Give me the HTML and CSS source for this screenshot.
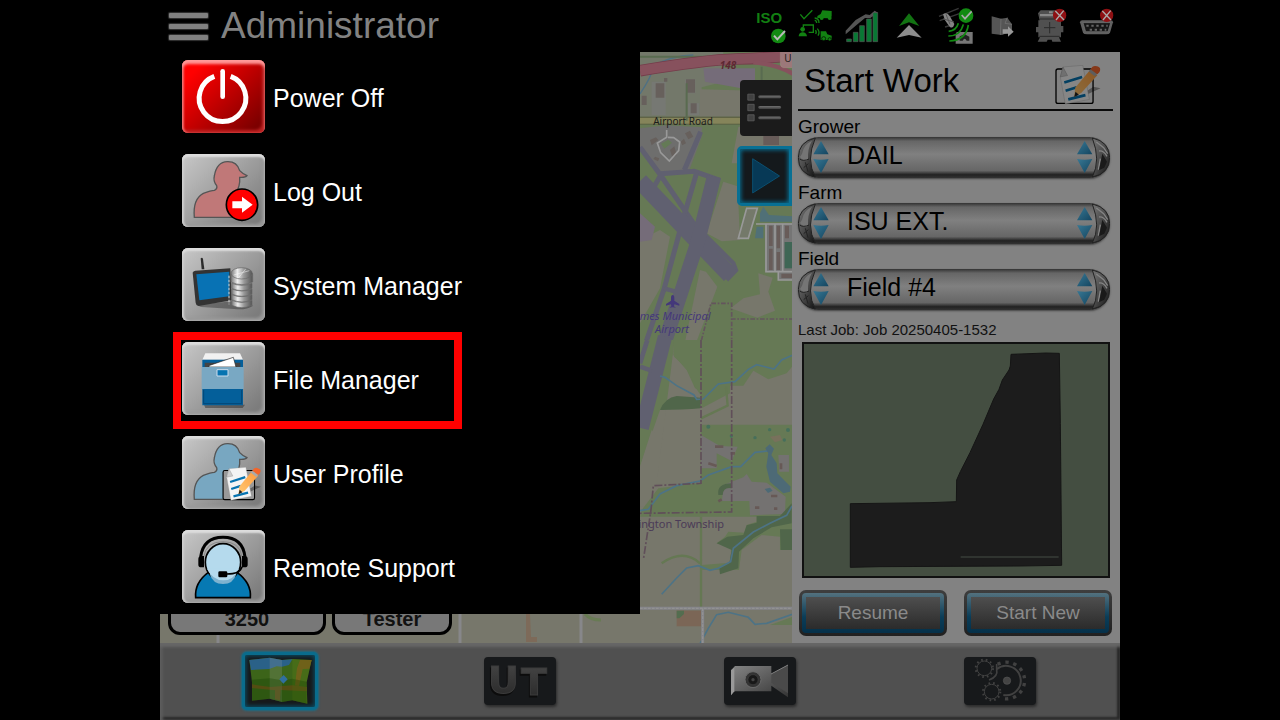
FILE: index.html
```html
<!DOCTYPE html>
<html lang="en">
<head>
  <meta charset="UTF-8">
  <meta name="viewport" content="width=device-width, initial-scale=1">
  <title>Start Work</title>
  <link rel="stylesheet" href="styles.css">
</head>
<body>
<svg class="defs" aria-hidden="true">
  <defs>
    <linearGradient id="steel" x1="0" x2="1"><stop offset="0" stop-color="#777"/><stop offset=".3" stop-color="#eee"/><stop offset=".6" stop-color="#999"/><stop offset="1" stop-color="#555"/></linearGradient>
    <linearGradient id="blueArrow" x1="0" x2="1" y1="0" y2="1"><stop offset="0" stop-color="#387894"/><stop offset="1" stop-color="#144560"/></linearGradient>
    <linearGradient id="chrome" x1="0" x2="1" y2="1"><stop offset="0" stop-color="#777"/><stop offset=".5" stop-color="#4a4a4a"/><stop offset="1" stop-color="#111"/></linearGradient>
    <linearGradient id="darkLetter" x2="0" y2="1"><stop offset="0" stop-color="#484848"/><stop offset="1" stop-color="#262626"/></linearGradient>
    <linearGradient id="camera" x2="1" y2="1"><stop offset="0" stop-color="#868686"/><stop offset="1" stop-color="#343434"/></linearGradient>
    <linearGradient id="wood" x1="1" x2="0" y2="1"><stop offset="0" stop-color="#ff9a3c"/><stop offset="1" stop-color="#ffc873"/></linearGradient>
    <symbol id="note" viewBox="0 0 140 130">
      <rect x="5" y="12" width="112" height="104" rx="6" fill="none" stroke="#000" stroke-width="4"/>
      <path d="M38 118 118 80 140 70 118 66Z" fill="#000" opacity=".35"/>
      <path d="M26 6 86 1 106 104 33 118 18 36Z" fill="#f4f4f4" stroke="#999"/>
      <path d="M26 6 40 32 18 36Z" fill="#ccc" stroke="#777"/>
      <path d="M30 53 84 36M34 78 68 67M42 104 94 91" stroke="#0673b0" stroke-width="8"/>
      <path d="M60 97 63 69 108 15 130 31 82 84Z" fill="url(#wood)"/>
      <path d="M60 97 64 81 74 90Z" fill="#222"/>
      <path d="M104 20 112 10 131 25 123 35Z" fill="#aaa"/>
      <path d="M109 13 Q117-1 129 4 Q144 8 136 22L130 28Z" fill="#f3652b"/>
    </symbol>
    <symbol id="person" viewBox="68 42 249 219">
      <path d="M105 232Q100 177 132 160Q155 151 165 151Q175 147 172 137Q161 123 165 108Q172 66 204 65Q233 64 241 92Q247 99 263 107Q259 113 241 112Q243 139 229 158L255 232Z" fill="currentColor" stroke="#555" stroke-width="4"/>
    </symbol>
    <symbol id="arrows" viewBox="0 0 52 100">
      <path d="M26 2 49 42 3 42Z" fill="url(#blueArrow)"/>
      <path d="M26 98 49 56Q26 60 3 56Z" fill="url(#blueArrow)"/>
    </symbol>
    <symbol id="cap-left" viewBox="0 0 99 123">
      <path d="M52 3Q1 14 1 62T52 120Q23 70 52 3Z" fill="url(#chrome)" stroke="#222" stroke-width="3"/>
      <path d="M12 50Q17 22 42 11 28 35 30 68Q16 76 6 60Z" fill="#757575"/>
      <path d="M5 66Q16 74 33 66M17 92 31 80M22 76 30 104" stroke="#222" stroke-width="3" fill="none"/>
      <use href="#arrows" x="43" y="10" width="52" height="100"/>
    </symbol>
    <symbol id="cap-right" viewBox="0 0 99 123">
      <path d="M46 3Q98 14 98 62T46 120Q72 70 46 3Z" fill="url(#chrome)" stroke="#222" stroke-width="3"/>
      <path d="M58 15 80 32 92 50M66 42Q80 40 90 58M70 65 64 98" stroke="#858585" stroke-width="4" fill="none"/>
      <path d="M76 50 90 74 82 92 66 100Z" fill="#1a1a1a"/>
      <use href="#arrows" x="-3" y="10" width="52" height="100"/>
    </symbol>
    <symbol id="bad" viewBox="0 0 42 42">
      <circle cx="21" cy="21" r="20" fill="#8e1013"/>
      <path d="M8 8 34 35M33 7 10 35" stroke="#aaa" stroke-width="4"/>
    </symbol>
  </defs>
</svg>

<div class="screen">
  <header class="topbar">
    <button class="hamburger" aria-label="Menu"><span></span><span></span><span></span></button>
    <h1>Administrator</h1>
    <div class="status">
      <!-- ISO -->
      <svg viewBox="30 12 120 132">
        <text x="49" y="68" class="iso">ISO</text>
        <circle cx="115" cy="108" r="22" fill="#128a12"/>
        <path d="M102 107 112 118 135 93" fill="none" stroke="#bbb" stroke-width="6"/>
      </svg>
      <!-- task link -->
      <svg viewBox="171 12 120 132">
        <g fill="none" stroke="#128212" stroke-width="4">
          <path d="M181 43 192 56 217 31M190 82V75H220V97H206M224 54Q237 55 237 69M224 61Q230 62 230 69M226 91Q231 96 227 102M232 86Q241 96 234 107"/>
        </g>
        <g fill="#128212">
          <circle cx="188" cy="88" r="7"/><path d="M176 109Q177 97 188 97T201 109Z"/>
          <path d="M232 48 242 42 247 31 275 33 275 49 270 55 232 54Z"/><circle cx="245" cy="54" r="6"/><circle cx="269" cy="54" r="6"/>
          <path d="M242 94H258L262 103 275 107V120H242Z"/>
        </g>
        <circle cx="251" cy="116" r="6" fill="#128212" stroke="#000" stroke-width="2"/><circle cx="269" cy="118" r="5" fill="#128212" stroke="#000" stroke-width="2"/>
      </svg>
      <!-- signal -->
      <svg viewBox="312 12 120 132">
        <path d="M317 103V92L347 60 369 47 377 43 389 45 404 32 414 38 391 54 375 54 347 77Z" fill="#555"/>
        <path d="M320 117h14v8h-14zM340 97h14v28h-14zM359 77h14v48h-14zM380 57h14v68h-14zM399 38h14v87h-14z" fill="#087834" stroke="#555" stroke-width="2"/>
      </svg>
      <!-- heading -->
      <svg viewBox="453 12 120 132">
        <path d="M507 40 538 78 507 67 477 78Z" fill="#127312"/>
        <path d="M507 75 545 113 507 105 470 113Z" fill="#8c8c8c"/>
      </svg>
      <!-- satellite -->
      <svg viewBox="24 12 120 132">
        <path d="M27 49 86 25M29 62 88 41M45 81 66 75" stroke="#383838" stroke-width="4"/>
        <path d="M39 43Q51 34 59 48L73 72Q69 88 59 80L45 61Z" fill="#858585"/>
        <path d="M40 57 72 66M48 43 60 73" stroke="#555" stroke-width="3"/>
        <path d="M80 96H128V131H77V106Z" fill="#777"/><path d="M89 122V109L104 103 118 110V122H110Q104 110 98 122Z" fill="#222"/>
        <g fill="none" stroke="#128a12" stroke-width="5"><path d="M56 94Q79 92 85 70M55 108Q91 108 100 73M58 123Q108 121 115 75"/></g>
        <circle cx="108" cy="47" r="22" fill="#128a12"/><path d="M95 45 105 56 125 34" fill="none" stroke="#aaa" stroke-width="5"/>
      </svg>
      <!-- file transfer -->
      <svg viewBox="165 12 120 132">
        <path d="M185 49 213 56 232 53 246 73V94L216 105 185 101Z" fill="#555"/>
        <path d="M213 56 211 105M232 53 225 70 246 73" stroke="#777" stroke-width="2" fill="none"/>
        <path d="M218 88H234V79L251 95 234 110V101H218Z" fill="#999"/>
      </svg>
      <!-- device -->
      <svg viewBox="306 12 120 132">
        <path d="M324 40 332 31H385V62H393V78H400V97H393V112H387L393 125H367L365 119H353L350 125H323L330 112H325V97H318V81H325V61H329Z" fill="#505050"/>
        <path d="M330 42H371V49H330ZM357 34H368V40H357Z" fill="#888"/>
        <path d="M330 57H386M328 109H389M359 66V100M342 83H376" stroke="#2b2b2b" stroke-width="3" fill="none"/>
        <use href="#bad" x="368" y="25" width="42" height="42"/>
      </svg>
      <!-- connector -->
      <svg viewBox="447 12 120 132">
        <path d="M450 67Q450 61 457 61H543Q549 61 549 67L540 98Q538 103 528 103H471Q461 103 459 98Z" fill="#606060"/>
        <path d="M459 68H542L534 95H467Z" fill="#161616" stroke="#777" stroke-width="2"/>
        <path d="M469 77h64M479 89h50" stroke="#666" stroke-width="6" stroke-dasharray="7 8"/>
        <use href="#bad" x="509" y="25" width="42" height="42"/>
      </svg>
    </div>
  </header>

  <main class="main">
    <section class="map">
      <svg class="map-canvas" viewBox="160 52 632 591" preserveAspectRatio="xMaxYMax slice">
        <rect x="160" y="52" width="632" height="591" fill="#77776b"/>
        <!-- north half: airport -->
        <g transform="translate(640 50) scale(.3333)">
          <path d="M0 0H480V880H0Z" fill="#667955"/>
          <path d="M0 0H250V95L185 112V200H0Z" fill="#73786a"/>
          <path d="M190 55H345V122L195 95Z" fill="#756c79"/>
          <path d="M180 118 345 122V200H180ZM250 395 293 409 300 570 245 574 200 550ZM295 230H480V340H275ZM180 660 198 665 232 710 160 900H130ZM355 670 398 683 385 725 405 782 352 803 272 775 310 745 360 733ZM0 570 60 540 90 560 60 715 0 820Z" fill="#77776b"/>
          <path d="M0 490 45 530 35 570 0 575Z" fill="#756c79"/>
          <path d="M0 235 80 226 186 232 185 260 145 368 60 375 0 300Z" fill="#6e6e6d"/>
          <path d="M35 95H77V195H35ZM136 88H166V130H136ZM143 160H178V195H143Z" fill="#777" opacity=".7"/>
          <path d="M47 100H73V143H47ZM138 88H165V128H138ZM152 160H170V190H152ZM5 137H20V165H5ZM72 84H82V95H72ZM135 250 150 242 160 260 145 268ZM90 300 103 289 110 315 98 325ZM30 270 48 262 55 270 35 286ZM122 275 132 266 138 280 127 286ZM45 320 58 325 54 334 40 327Z" fill="#67605c"/>
          <path d="M0 212H480" stroke="#55583f" stroke-width="23"/><path d="M0 212H480" stroke="#85845a" stroke-width="18"/>
          <path d="M0 132Q35 80 40 50 80 20 160 15" stroke="#4e7083" stroke-width="4" fill="none"/>
          <path d="M365 50V195M0 20H210M140 100V212" stroke="#596b50" stroke-width="6"/>
          <path d="M0 62Q190 30 290 27T480 15" stroke="#743c4a" stroke-width="35" fill="none"/><path d="M0 62Q190 30 290 27T480 15" stroke="#87515d" stroke-width="30" fill="none"/>
          <path d="M340 37Q430 45 480 86" stroke="#87515d" stroke-width="13" fill="none"/>
          <path d="M421 0H480V53H430Q421 51 421 42Z" fill="#9c787a" stroke="#a98"/>
          <path d="M80 240V262L52 279 62 308 88 333 116 302 119 276 101 263 84 262" stroke="#999" stroke-width="5" fill="none"/>
          <path d="M63 281 85 269 96 278 73 296Z" fill="#647a56"/>
          <g fill="none" stroke="#606070">
            <path d="M182 245 133 360M0 292 62 376 171 535M62 376 40 414M62 371 163 364 240 391" stroke-width="15"/>
            <path d="M170 368 130 505 72 718 10 900" stroke-width="15"/>
            <path d="M72 715 115 727M130 495 150 515 190 550 280 640 288 661 260 690" stroke-width="13"/>
            <path d="M0 393 270 676" stroke-width="50"/>
            <path d="M222 380 175 570 60 920" stroke-width="43"/>
          </g>
          <path d="M320 475H352L325 565H295Z" fill="#74796a" stroke="#999" stroke-width="5"/>
          <path d="M360 490 370 470 387 495 480 500V515H360ZM350 530H370V565H345Z" fill="#507077"/>
          <path d="M376 520H480V690H415V667H376Z" fill="#757575"/>
          <path d="M348 522H480M378 520V665H480M405 522V665M428 522V665M415 665V690H480" stroke="#999" stroke-width="5" fill="none"/>
          <path d="M387 527H398V588H387ZM387 596H398V660H387ZM410 527H420V595H410ZM410 606H420V660H410ZM435 527H447V565H435ZM424 671H480V684H424ZM370 255H417V285H370Z" fill="#685c59"/>
          <path d="M434 576H480V655H434Z" fill="#3f6655"/>
          <path d="M98 735Q103 735 103 745V752L118 762V767L103 763 102 769 108 773 98 772 88 773 94 769 93 763 78 767V762L93 752V745Q93 735 98 735Z" fill="#44387a"/>
          <path d="M182 900V880L213 760H275V900M273 807H480" stroke="#64555d" stroke-width="5" stroke-dasharray="14 5 5 5" fill="none"/>
        </g>
        <!-- south half: township -->
        <g transform="translate(640 340) scale(.3333)">
          <path d="M0 10H480V915H0Z" fill="#77776b"/>
          <path d="M0 0H100Q110 60 140 100L165 150 180 180V0H480V50L440 100 385 118 340 92 310 137H270V160L185 205 182 182 182 173 110 168 60 210 0 380Z" fill="#667955"/>
          <path d="M110 50Q130 90 165 150L180 165V10H108Z" fill="#667955"/>
          <path d="M104 0 100 45 140 90 165 145 182 150V300H70L35 270 0 380V500H180V430H50Z" fill="#77776b"/>
          <path d="M100 0H185V170L165 140Q150 85 102 50Z" fill="#667955"/>
          <path d="M182 254H480V530H0L5 510 55 445 182 428Z" fill="#667955"/>
          <path d="M60 210Q75 173 110 168L182 173V205Q130 210 60 210Z" fill="#50664a"/>
          <path d="M75 -10 5 265" stroke="#606070" stroke-width="43"/>
          <path d="M22 0 0 70M0 80 35 92" stroke="#606070" stroke-width="14"/>
          <path d="M183 235 263 197 258 140M183 530V800M65 670Q130 625 180 670" stroke="#657853" stroke-width="7" fill="none"/>
          <path d="M183 285 240 318 293 320 275 363 230 340V385H183ZM250 435 310 412 320 402 335 425 380 428 437 470 435 522 330 526 328 483H246ZM415 345H447V395H418Z" fill="#747271"/>
          <path d="M235 465Q230 430 275 430V445Q250 440 248 465Z" fill="#50664a"/>
          <path d="M390 290 420 285 427 300 405 307Z" fill="#78715c"/>
          <path d="M265 575 313 578 320 555 350 545V530H440L480 500V630H420V590L365 585 305 630 297 690H185V675L270 668 275 620 230 610 255 590Z" fill="#667955"/>
          <path d="M230 610 262 590 310 585 320 556 350 548V528H420L455 490V550L395 562 340 595 297 635 295 685 240 703 238 685 268 670 275 630ZM420 568H480V630H422Z" fill="#50664a"/>
          <g fill="none" stroke="#4d7386" stroke-width="5">
            <path d="M60 108 75 112 110 137 162 165 170 178 190 177 235 132 285 125 325 88 350 74 402 87 425 60 480 35"/>
            <path d="M0 512 25 508 60 462 110 437 180 423 205 405 275 380 302 380 345 337 390 332"/>
            <path d="M65 763 110 714 140 684 175 677 210 691 235 685 272 665 280 625 340 576 390 550 440 526 455 500 480 490"/>
            <path d="M178 915 205 865 230 824 265 817 325 832 345 853 380 850 480 815"/>
          </g>
          <path d="M376 325 389 313 402 326 394 345 410 370 412 400 452 440 450 455 430 460 390 425 379 380 385 340ZM374 447 390 443 398 452 384 459Z" fill="#4d6a76"/>
          <g fill="#466f5b"><circle cx="205" cy="260" r="6"/><circle cx="274" cy="288" r="5"/><circle cx="345" cy="293" r="5"/><circle cx="389" cy="269" r="5"/><circle cx="444" cy="270" r="6"/><circle cx="433" cy="300" r="5"/></g>
          <path d="M205 370 230 378M225 320H250M272 340H285M235 484 245 478M345 503H358M402 506H412M393 468H412M423 370V388" stroke="#675956" stroke-width="8"/>
          <path d="M183 0V430L40 437 33 510 10 660M275 0V516L0 520" stroke="#604f59" stroke-width="5" stroke-dasharray="24 6 6 6" fill="none"/>
          <path d="M110 812H183V859H110Z" fill="#7b6656"/><path d="M110 812H132V822L118 835H110Z" fill="#536d4f"/>
          <path d="M390 855 480 822V855Z" fill="#667955"/>
          <path d="M0 805H480M188 805V915" stroke="#85858a" stroke-width="9"/><path d="M0 805H480M188 805V915" stroke="#929292" stroke-width="4" stroke-dasharray="8 4"/>
        </g>
        <!-- strip under the menu -->
        <path d="M218 600V643M460 600V643M581 600V643" stroke="#87878a" stroke-width="3"/>
        <path d="M526 614H530L531 637H537V642H526Z" fill="#7d6a59"/>
        <path d="M585 614Q590 620 601 620" stroke="#687b54" stroke-width="3" fill="none"/>
        <g class="map-labels">
          <text x="728" y="69" class="road-no">148</text>
          <text x="683" y="125" class="road">Airport Road</text>
          <text x="788" y="62" class="road">U</text>
          <text x="672" y="320" class="airport">Ames Municipal</text>
          <text x="672" y="333" class="airport">Airport</text>
          <text x="724" y="528" class="town">Washington Township</text>
        </g>
      </svg>

      <div class="readouts">
        <div class="readout wide">3250</div>
        <div class="readout">Tester</div>
      </div>

      <div class="map-tools">
        <button class="tool" aria-label="Layers">
          <svg viewBox="302 92 154 164">
            <path d="M325 133h19v18h-19zM325 163h19v19h-19zM325 194h19v18h-19z" fill="#414141" stroke="#666" stroke-width="2"/>
            <path d="M360 141H420M360 172H420M360 203H420" stroke="#555" stroke-width="8" stroke-linecap="round"/>
            <path d="M360 139H420M360 170H420M360 201H420" stroke="#777" stroke-width="2"/>
          </svg>
        </button>
        <button class="tool active" aria-label="Run">
          <svg viewBox="308 301 130 150"><path d="M336 322 420 376 336 429Z" fill="#073956" stroke="#0b5273" stroke-width="3"/></svg>
        </button>
      </div>
    </section>

    <aside class="panel">
      <div class="panel-head">
        <h2>Start Work</h2>
        <button class="edit" aria-label="Edit"><svg viewBox="0 0 140 130"><use href="#note"/></svg></button>
      </div>
      <label for="grower">Grower</label>
      <div class="picker">
        <svg class="cap"><use href="#cap-left"/></svg>
        <select id="grower"><option>DAIL</option></select>
        <svg class="cap"><use href="#cap-right"/></svg>
      </div>
      <label for="farm">Farm</label>
      <div class="picker">
        <svg class="cap"><use href="#cap-left"/></svg>
        <select id="farm"><option>ISU EXT.</option></select>
        <svg class="cap"><use href="#cap-right"/></svg>
      </div>
      <label for="field">Field</label>
      <div class="picker">
        <svg class="cap"><use href="#cap-left"/></svg>
        <select id="field"><option>Field #4</option></select>
        <svg class="cap"><use href="#cap-right"/></svg>
      </div>
      <p class="last-job">Last Job: Job 20250405-1532</p>
      <svg class="preview" viewBox="42 22 912 696">
        <path d="M663 53 768 49 808 50 811 260 815 686 690 688 270 690 181 692V501L420 498 499 495 500 430 511 405 540 348 579 263 611 187 627 158 637 130 657 100 661 88Z" fill="#1c1c1c" stroke="#151515" stroke-width="3"/>
        <path d="M512 661H806" stroke="#454d45" stroke-width="3"/>
      </svg>
      <div class="actions">
        <button class="action">Resume</button>
        <button class="action">Start New</button>
      </div>
    </aside>

    <nav class="menu">
      <button class="item">
        <span class="tile red"><svg viewBox="68 180 249 219"><path d="M165 229A70 70 0 1 0 214 229" fill="none" stroke="#fff" stroke-width="15"/><path d="M190 214V290" stroke="#fff" stroke-width="14" stroke-linecap="round"/></svg></span>
        <span class="item-text">Power Off</span>
      </button>
      <button class="item">
        <span class="tile"><svg viewBox="68 42 249 219">
          <use href="#person" x="68" y="42" width="249" height="219" color="#c07878"/>
          <circle cx="248" cy="194" r="47" fill="#f00" stroke="#000" stroke-width="5"/>
          <path d="M219 184H248V170L280 194 248 218V205H219Z" fill="#fff"/>
        </svg></span>
        <span class="item-text">Log Out</span>
      </button>
      <button class="item">
        <span class="tile"><svg viewBox="68 323 249 219">
          <path d="M110 493 220 483 282 496Q260 510 225 506L125 500Z" fill="#222" opacity=".4"/>
          <path d="M124 354Q129 350 131 356L135 387H127Z" fill="#2b2b2b"/>
          <path d="M100 397Q101 392 108 391L213 384 217 480 118 497Q110 495 109 488Z" fill="#333"/>
          <path d="M111 402 210 394V468L120 480Z" fill="#0872b4"/>
          <g fill="url(#steel)" stroke="#666" stroke-width="2">
            <path d="M217 480V495Q248 509 278 495V480Q248 492 217 480Z"/>
            <path d="M217 463V478Q248 492 278 478V463Q248 475 217 463Z"/>
            <path d="M217 446V461Q248 475 278 461V446Q248 458 217 446Z"/>
            <path d="M217 429V444Q248 458 278 444V429Q248 441 217 429Z"/>
            <path d="M215 400V425Q248 441 280 425V400Z"/>
            <ellipse cx="247" cy="399" rx="32" ry="17"/>
          </g>
          <path d="M223 404 270 391M237 413 259 386" stroke="#fff" stroke-width="2" opacity=".7"/>
          <path d="M209 406V492" stroke="#ddd" stroke-width="3" stroke-dasharray="8 4"/>
        </svg></span>
        <span class="item-text">System Manager</span>
      </button>
      <button class="item marked">
        <span class="tile"><svg viewBox="68 48 249 219">
          <path d="M134 236H257L250 246H138Z" fill="#222" opacity=".45"/>
          <path d="M129 101 138 82H242L251 101Z" fill="#f1f1f1"/>
          <path d="M129 101H251V238H129Z" fill="#045f9a"/>
          <path d="M136 110H243V124H136Z" fill="#444"/>
          <path d="M148 119 222 94 230 123H150Z" fill="#fff" stroke="#222" stroke-width="2"/>
          <path d="M127 123H253V189H127Z" fill="#79a8c3"/>
          <path d="M173 131H206V150H173Z" fill="#0673b0" stroke="#cde" stroke-width="3"/>
          <path d="M133 192V233H247V192" stroke="#034677" stroke-width="3" fill="none"/>
        </svg></span>
        <span class="item-text">File Manager</span>
      </button>
      <button class="item">
        <span class="tile"><svg viewBox="68 330 249 219">
          <use href="#person" x="68" y="330" width="249" height="219" color="#78a7c1"/>
          <rect x="191" y="433" width="95" height="89" rx="5" fill="#999"/>
          <use href="#note" x="187" y="423" width="118" height="110"/>
        </svg></span>
        <span class="item-text">User Profile</span>
      </button>
      <button class="item">
        <span class="tile"><svg viewBox="68 56 249 219">
          <path d="M109 259Q105 214 147 183H233Q277 215 273 259Z" fill="#0679b3" stroke="#000" stroke-width="5"/>
          <ellipse cx="191" cy="153" rx="53" ry="56" fill="#b5daed" stroke="#000" stroke-width="5"/>
          <path d="M151 188H231Q222 218 191 218T151 188Z" fill="#7db2cf"/>
          <path d="M143 172Q160 206 191 207T239 172Z" fill="#b5daed"/>
          <path d="M124 137Q132 78 191 78T257 137" fill="none" stroke="#000" stroke-width="9"/>
          <path d="M133 137Q140 91 191 91T248 137" fill="none" stroke="#777" stroke-width="2"/>
          <path d="M126 134Q117 134 117 143V160Q117 168 126 168H134V134ZM256 134Q265 134 265 143V160Q265 168 256 168H248V134Z"/>
          <path d="M248 166Q242 188 202 188" stroke="#000" stroke-width="5" fill="none"/>
          <rect x="177" y="180" width="27" height="18" rx="4"/>
        </svg></span>
        <span class="item-text">Remote Support</span>
      </button>
    </nav>
  </main>

  <footer class="tabs">
    <button class="tab active" aria-label="Map">
      <svg viewBox="255 438 210 156">
        <path d="M268 453 329 446 366 453 397 450 455 453 440 520 442 584 397 574 366 579 329 569 276 575V520Z" fill="#3c6419"/>
        <path d="M268 453 329 446 366 453 397 451 387 468 366 473 350 472 328 480 273 483Z" fill="#2a6188"/>
        <path d="M276 526 330 534 397 529 440 534V547L362 543 360 574 345 571V544L276 537ZM420 453H455L448 479 428 480 417 531 405 529 411 478Z" fill="#71551b"/>
        <path d="M329 446 366 453V579L329 569Z" fill="#aaa" opacity=".2"/>
        <path d="M397 450 455 453 440 520 442 584 397 574Z" fill="#6a8c16" opacity=".23"/>
        <path d="M276 512 330 508 366 514 397 509 440 518V584L397 574 366 579 329 569 276 575Z" fill="#123a00" opacity=".3"/>
        <path d="M371 498 383 511 370 524 358 511Z" fill="#306f9e"/>
      </svg>
    </button>
    <button class="tab" aria-label="Universal terminal">
      <svg viewBox="0 0 72 48">
        <g class="ut"><text x="4" y="36">U</text><text x="37" y="38">T</text></g>
      </svg>
    </button>
    <button class="tab" aria-label="Camera">
      <svg viewBox="792 171 216 144">
        <path d="M813 286V211L825 198H934V221L984 194V292L934 257V274H823Z" fill="url(#camera)"/>
        <path d="M934 222 984 195V280L934 248Z" fill="#4a4a4a"/><path d="M933 222 984 195" stroke="#999" stroke-width="2"/>
        <path d="M813 286V211L823 203V274Z" fill="#999"/>
        <circle cx="879" cy="239" r="24" fill="#333" stroke="#6b6b6b" stroke-width="3"/><circle cx="879" cy="239" r="15" fill="#181818" stroke="#555"/><circle cx="879" cy="239" r="5" fill="#444"/>
      </svg>
    </button>
    <button class="tab" aria-label="Settings">
      <svg viewBox="519 231 216 144" fill="none">
        <g stroke="#414141">
          <path d="M620 253A55 55 0 1 1 638 356" stroke-width="10" stroke-dasharray="10 14"/>
          <path d="M617 268A44 44 0 1 1 637 345" stroke-width="6"/>
          <path d="M617 252V268Q622 290 594 300" stroke-width="5"/>
          <circle cx="580" cy="265" r="26" stroke-width="6" stroke-dasharray="5 9"/><circle cx="580" cy="265" r="22" stroke-width="3"/>
          <circle cx="602" cy="335" r="26" stroke-width="6" stroke-dasharray="5 9"/><circle cx="602" cy="335" r="22" stroke-width="3"/>
        </g>
        <circle cx="648" cy="302" r="11" fill="#444" stroke="#555" stroke-width="2"/>
      </svg>
    </button>
  </footer>
</div>
</body>
</html>
```
FILE: styles.css
```css
* {
  box-sizing: border-box;
}
body {
  margin: 0;
  background: #000;
  font-family: "Liberation Sans", Arial, sans-serif;
}
h1, h2, p {
  margin: 0;
  font-weight: normal;
}
button, select {
  margin: 0;
  padding: 0;
  border: 0;
  background: none;
  font-family: inherit;
  color: inherit;
  cursor: pointer;
}
svg {
  display: block;
}
.defs {
  position: absolute;
  width: 0;
  height: 0;
}
.screen {
  width: 75%;
  min-height: 100vh;
  margin: 0 auto;
  display: flex;
  flex-direction: column;
}

/* top bar */
.topbar {
  height: 52px;
  padding: 0 1px 0 9px;
  display: flex;
  align-items: center;
  color: #828282;
}
.topbar h1 {
  flex: 1;
  padding-left: 13px;
  font-size: 37px;
  line-height: 52px;
}
.hamburger {
  width: 39px;
  display: flex;
  flex-direction: column;
  gap: 6px;
}
.hamburger span {
  height: 5px;
  border-radius: 1px;
  background: #808080;
  box-shadow: 0 0 1px 1px #333;
}
.status {
  display: flex;
  gap: 7px;
}
.status svg {
  width: 40px;
  height: 44px;
}
.iso {
  font: bold 45px "Liberation Sans", sans-serif;
  fill: #127f12;
}

/* map */
.main {
  position: relative;
  flex: 1;
  display: flex;
}
.map {
  position: relative;
  flex: 1;
  overflow: hidden;
}
.map-canvas {
  position: absolute;
  inset: 0;
  width: 100%;
  height: 100%;
}
.map-labels {
  font-family: "Noto Sans", sans-serif;
  text-anchor: middle;
}
.road-no {
  font-size: 10px;
  font-weight: bold;
  font-style: italic;
  fill: #5c2833;
}
.road {
  font-size: 10px;
  fill: #1c1c1c;
}
.airport {
  font-size: 11px;
  font-style: italic;
  fill: #44387a;
}
.town {
  font-size: 11px;
  text-anchor: end;
  fill: #4b3b57;
}
.readouts {
  position: absolute;
  left: 8px;
  bottom: 8px;
  display: flex;
  gap: 6px;
}
.readout {
  width: 120px;
  height: 48px;
  padding-top: 18px;
  border: 3px solid #000;
  border-radius: 12px;
  background: #787878;
  color: #111;
  font-size: 20px;
  font-weight: bold;
  line-height: 22px;
  text-align: center;
}
.wide {
  width: 158px;
}
.map-tools {
  position: absolute;
  top: 28px;
  right: 0;
  display: flex;
  flex-direction: column;
  align-items: flex-end;
  gap: 10px;
}
.tool {
  width: 52px;
  height: 56px;
  border-radius: 4px 0 0 4px;
  background: #1b1b1b;
}
.tool svg {
  width: 100%;
  height: 100%;
}
.tool.active {
  width: 55px;
  height: 60px;
  padding: 3px;
  border: 3px solid #087094;
  border-radius: 5px 0 0 5px;
  background: #14191c;
  box-shadow: inset 0 0 4px 1px #087094;
}

/* start work panel */
.panel {
  width: 328px;
  padding: 0 7px 7px 6px;
  background: #828282;
  color: #000;
}
.panel-head {
  height: 59px;
  margin-bottom: 1px;
  padding: 0 12px 0 6px;
  display: flex;
  justify-content: space-between;
  align-items: center;
  border-bottom: 2px solid #0a0a0a;
}
.panel-head h2 {
  font-size: 33px;
  line-height: 56px;
}
.edit svg {
  width: 47px;
  height: 43px;
  margin-top: 12px;
  filter: brightness(.55);
}
.panel label {
  display: block;
  padding-top: 4px;
  font-size: 19px;
  line-height: 21px;
}
.picker {
  height: 41px;
  margin-right: 3px;
  display: flex;
  border-radius: 21px;
  background: linear-gradient(#333, #666 10%, #808080 42%, #666 82%, #222 92%, #333);
  box-shadow: 0 1px 2px #444;
}
.cap {
  flex: none;
  width: 33px;
  height: 41px;
}
.picker select {
  flex: 1;
  padding: 0 16px 5px;
  appearance: none;
  font-size: 25px;
}
.last-job {
  padding: 10px 0 2px;
  font-size: 15px;
  line-height: 20px;
  color: #111;
}
.preview {
  width: calc(100% - 7px);
  margin-left: 4px;
  border: 2px solid #111;
  background: #444e41;
}
.actions {
  margin-top: 12px;
  padding: 0 1px;
  display: flex;
  gap: 17px;
}
.action {
  flex: 1;
  height: 46px;
  padding: 4px;
  border: 3px solid transparent;
  border-radius: 7px;
  background:
    linear-gradient(#4e4e4e, #2b2b2b) content-box,
    linear-gradient(#53717e, #0a3d58 60%, #053049) padding-box,
    linear-gradient(#3e3e3e, #202020) border-box;
  color: #8a8a8a;
  font-size: 19px;
}

/* slide-out menu */
.menu {
  position: absolute;
  top: 0;
  left: 0;
  width: 50%;
  padding: 8px 22px 11px;
  display: flex;
  flex-direction: column;
  align-items: flex-start;
  gap: 21px;
  background: #000;
  color: #fff;
}
.item {
  position: relative;
  display: flex;
  align-items: center;
  gap: 8px;
  font-size: 25px;
}
.item-text {
  padding-top: 3px;
}
.tile {
  width: 83px;
  height: 73px;
  border-radius: 6px;
  background: linear-gradient(135deg, #c8c8c8, #747474);
  box-shadow: inset 0 3px 2px #ddd, inset 2px 0 2px #ccc, inset -3px -3px 3px #999, inset 0 0 0 1px #777;
}
.tile.red {
  background: linear-gradient(135deg, #f00 15%, #7c0000 90%);
  box-shadow: inset 0 4px 3px #f99, inset 2px 0 2px #e55, inset -3px -3px 3px #b22, inset 0 0 0 1px #777;
}
.tile svg {
  width: 100%;
  height: 100%;
}
.marked {
  padding-right: 35px;
}
.marked::after {
  content: "";
  position: absolute;
  inset: -10px -8px -14px -9px;
  border: 8px solid #f00;
}

/* bottom tabs */
.tabs {
  height: 77px;
  padding-bottom: 2px;
  display: grid;
  grid-template-columns: repeat(4, 1fr);
  align-items: center;
  justify-items: center;
  background: #505050;
  box-shadow: inset 0 5px 3px -1px #666, inset 3px 0 3px #5c5c5c, inset -3px -3px 2px #282828;
}
.tab {
  width: 72px;
  height: 48px;
  border-radius: 4px;
  background: #17191b;
  box-shadow: 1px 2px 3px #2b2b2b;
}
.tab svg {
  width: 100%;
  height: 100%;
}
.tab.active {
  width: 76px;
  height: 58px;
  border: 3px solid #0a6c8c;
  border-radius: 5px;
  box-shadow: 0 0 2px 1px #1c6a83, inset 0 0 4px 1px #0a5068;
}
.ut {
  font: bold 38px "DejaVu Sans", sans-serif;
  fill: url(#darkLetter);
  stroke: #3c3c3c;
  filter: drop-shadow(-1px 2px 0 #0c0c0c);
}
```
